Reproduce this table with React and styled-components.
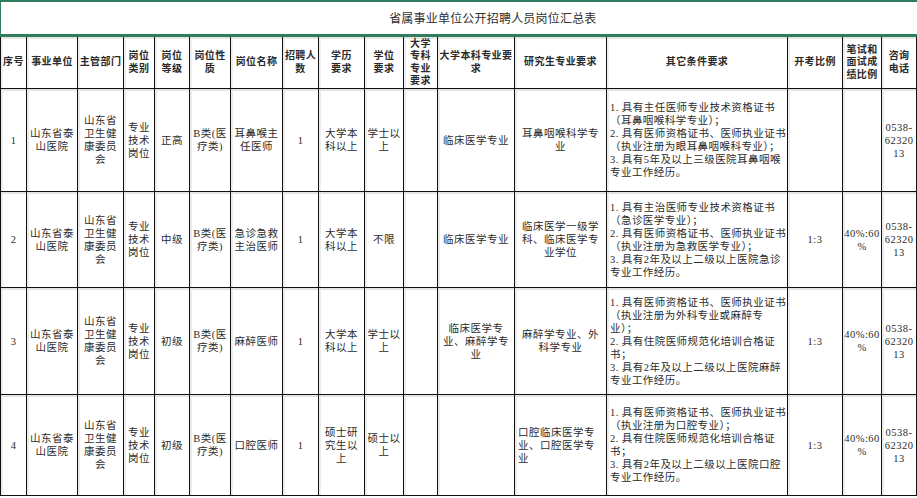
import React from 'react';
import styled, { createGlobalStyle } from 'styled-components';

const GlobalStyle = createGlobalStyle`
  html, body {
    margin: 0;
    padding: 0;
    background: #ffffff;
  }
  body {
    font-family: "Liberation Serif", "Noto Sans CJK SC", serif;
    color: #262626;
  }
`;

const Sheet = styled.table`
  width: 916px;
  table-layout: fixed;
  border-collapse: collapse;
  background: #ffffff;
`;

const TitleCell = styled.td`
  height: 32px;
  border-top: 2px solid #2f7d5c;
  border-left: 1px solid #2f7d5c;
  border-bottom: 3px solid #2f7d5c;
  border-right: none;
  padding: 0 0 0 68px;
  text-align: center;
  vertical-align: middle;
  font-size: 12px;
  letter-spacing: 0.2px;
  color: #303030;
`;

const HeadCell = styled.th`
  height: 51px;
  border: 1px solid #111111;
  box-shadow: inset 0 2px 0 #e6e6e6, inset 2px 0 0 #eeeeee;
  padding: 0 1px;
  text-align: center;
  vertical-align: middle;
  font-size: 10px;
  line-height: 12.5px;
  letter-spacing: 0.4px;
  font-weight: 700;
  color: #2a2a2a;
  white-space: nowrap;
`;

const Cell = styled.td`
  height: ${(p) => p.$h}px;
  border: 1px solid #111111;
  box-shadow: inset 0 2px 0 #e4e4e4, inset 2px 0 0 #ececec;
  padding: ${(p) => (p.$left ? '0 0 0 3px' : '0 1px')};
  text-align: ${(p) => (p.$left ? 'left' : 'center')};
  vertical-align: middle;
  font-size: 10.5px;
  line-height: 13px;
  letter-spacing: ${(p) => (p.$wide ? '0.45px' : '0.5px')};
  color: #2b2b2b;
  white-space: nowrap;
  overflow: visible;
`;

const widths = [26, 51, 46, 31, 35, 41, 52, 36, 46, 39, 34, 77, 92, 181, 55, 39, 35];

const headers = [
  ['序号'],
  ['事业单位'],
  ['主管部门'],
  ['岗位', '类别'],
  ['岗位', '等级'],
  ['岗位性', '质'],
  ['岗位名称'],
  ['招聘人', '数'],
  ['学历', '要求'],
  ['学位', '要求'],
  ['大学', '专科', '专业', '要求'],
  ['大学本科专业要', '求'],
  ['研究生专业要求'],
  ['其它条件要求'],
  ['开考比例'],
  ['笔试和', '面试成', '绩比例'],
  ['咨询', '电话'],
];

const unit = ['山东省泰', '山医院'];
const dept = ['山东省', '卫生健', '康委员', '会'];
const kind = ['专业', '技术', '岗位'];
const phone = ['0538-', '62320', '13'];
const ratio = ['40%:60', '%'];

const rows = [
  {
    h: 102,
    cells: [
      ['1'], unit, dept, kind, ['正高'], ['B类(医', '疗类)'], ['耳鼻喉主', '任医师'], ['1'],
      ['大学本', '科以上'], ['学士以', '上'], [], ['临床医学专业'], ['耳鼻咽喉科学专', '业'],
      [
        '1. 具有主任医师专业技术资格证书',
        '（耳鼻咽喉科学专业）；',
        '2. 具有医师资格证书、医师执业证书',
        '（执业注册为眼耳鼻咽喉科专业）；',
        '3. 具有5年及以上三级医院耳鼻咽喉',
        '专业工作经历。',
      ],
      [], [], phone,
    ],
  },
  {
    h: 95,
    cells: [
      ['2'], unit, dept, kind, ['中级'], ['B类(医', '疗类)'], ['急诊急救', '主治医师'], ['1'],
      ['大学本', '科以上'], ['不限'], [], ['临床医学专业'], ['临床医学一级学', '科、临床医学专', '业学位'],
      [
        '1. 具有主治医师专业技术资格证书',
        '（急诊医学专业）；',
        '2. 具有医师资格证书、医师执业证书',
        '（执业注册为急救医学专业）；',
        '3. 具有2年及以上二级以上医院急诊',
        '专业工作经历。',
      ],
      ['1:3'], ratio, phone,
    ],
  },
  {
    h: 106,
    cells: [
      ['3'], unit, dept, kind, ['初级'], ['B类(医', '疗类)'], ['麻醉医师'], ['1'],
      ['大学本', '科以上'], ['学士以', '上'], [], ['临床医学专', '业、麻醉学专', '业'], ['麻醉学专业、外', '科学专业'],
      [
        '1. 具有医师资格证书、医师执业证书',
        '（执业注册为外科专业或麻醉专',
        '业）；',
        '2. 具有住院医师规范化培训合格证',
        '书；',
        '3. 具有2年及以上二级以上医院麻醉',
        '专业工作经历。',
      ],
      ['1:3'], ratio, phone,
    ],
  },
  {
    h: 100,
    cells: [
      ['4'], unit, dept, kind, ['初级'], ['B类(医', '疗类)'], ['口腔医师'], ['1'],
      ['硕士研', '究生以', '上'], ['硕士以', '上'], [], [], ['口腔临床医学专', '业、口腔医学专', '业'],
      [
        '1. 具有医师资格证书、医师执业证书',
        '（执业注册为口腔专业）；',
        '2. 具有住院医师规范化培训合格证',
        '书；',
        '3. 具有2年及以上二级以上医院口腔',
        '专业工作经历。',
      ],
      ['1:3'], ratio, phone,
    ],
  },
];

function Lines({ lines }) {
  return lines.map((line, i) => (
    <React.Fragment key={i}>
      {i > 0 && <br />}
      {line}
    </React.Fragment>
  ));
}

function App() {
  return (
    <>
      <GlobalStyle />
      <Sheet>
        <colgroup>
          {widths.map((w, i) => (
            <col key={i} style={{ width: w }} />
          ))}
        </colgroup>
        <tbody>
          <tr>
            <TitleCell colSpan={17}>省属事业单位公开招聘人员岗位汇总表</TitleCell>
          </tr>
          <tr>
            {headers.map((lines, i) => (
              <HeadCell key={i}>
                <Lines lines={lines} />
              </HeadCell>
            ))}
          </tr>
          {rows.map((row, r) => (
            <tr key={r}>
              {row.cells.map((lines, i) => (
                <Cell
                  key={i}
                  $h={row.h}
                  $left={i === 13 || (r === 3 && i === 12)}
                  $wide={i === 13}
                >
                  <Lines lines={lines} />
                </Cell>
              ))}
            </tr>
          ))}
        </tbody>
      </Sheet>
    </>
  );
}

export default App;
